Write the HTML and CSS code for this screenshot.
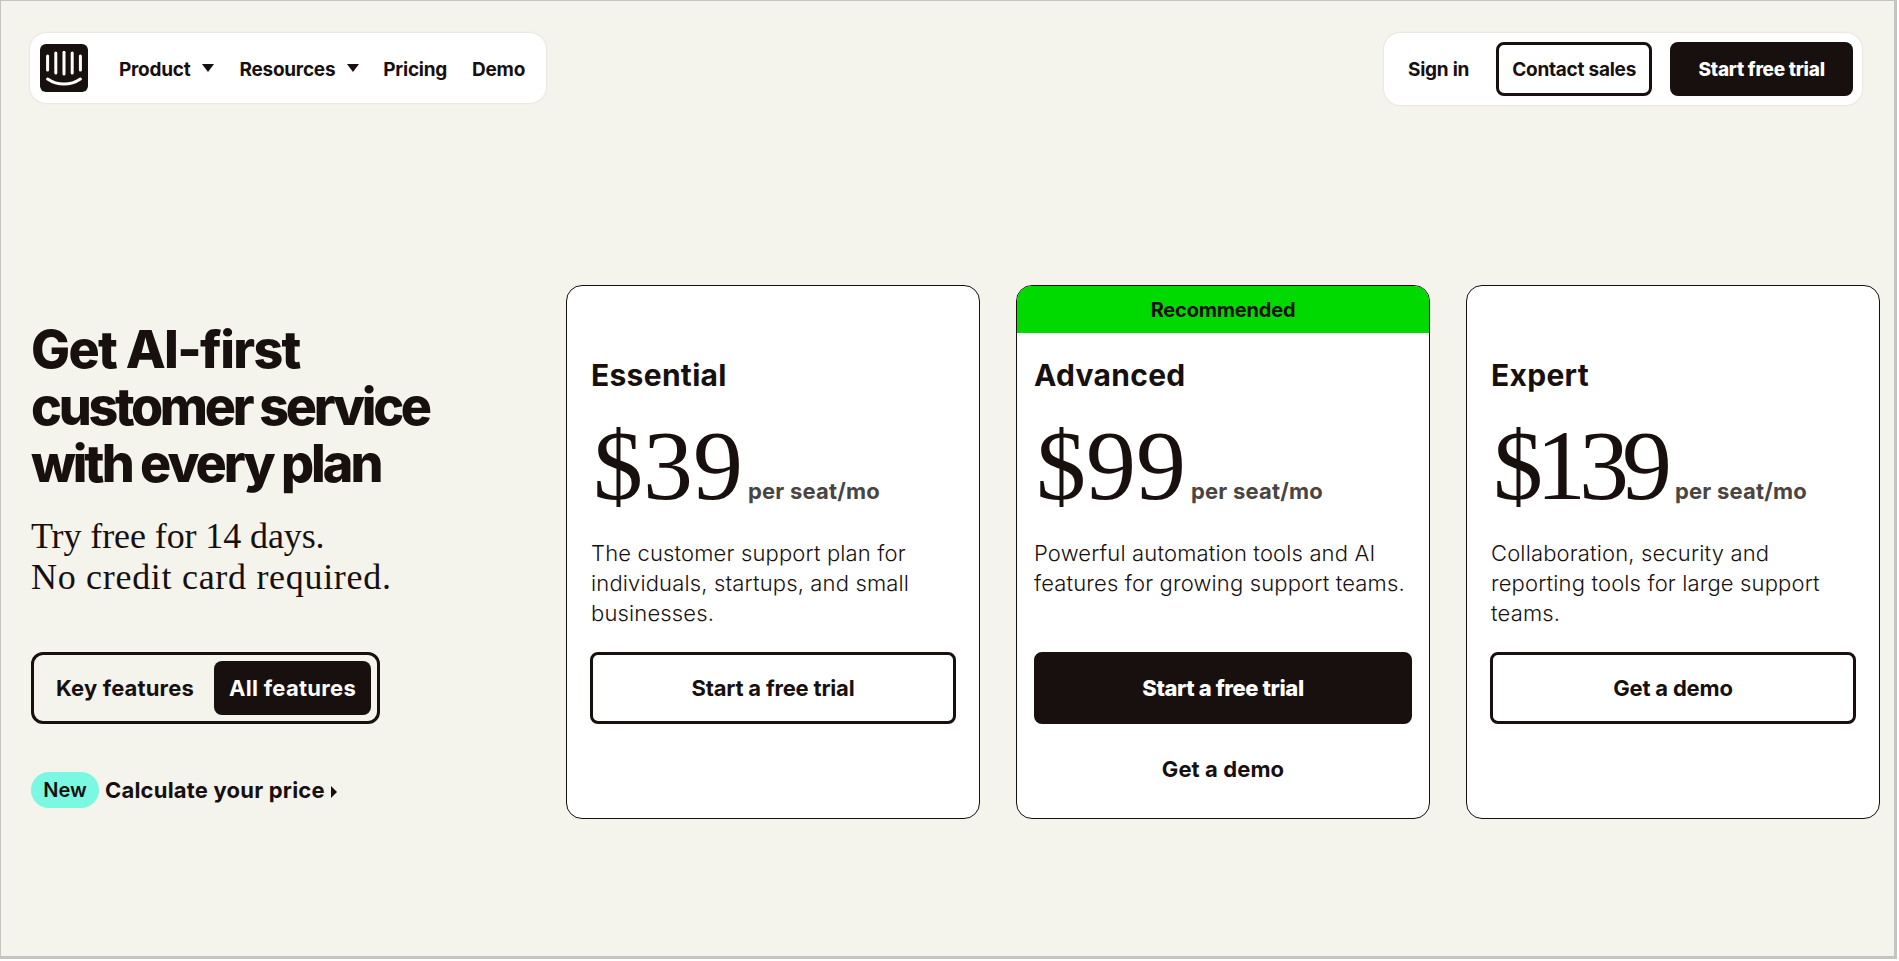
FILE: index.html
```html
<!DOCTYPE html>
<html lang="en">
<head>
<meta charset="utf-8">
<title>Pricing</title>
<link rel="stylesheet" href="styles.css">
</head>
<body>
<div class="page">
  <header class="header">
    <nav class="nav-left">
      <svg class="logo" viewBox="0 0 48 48" aria-label="Logo">
        <rect width="48" height="48" rx="6" fill="#17100e"/>
        <g stroke="#fff" stroke-width="3" stroke-linecap="round" fill="none">
          <path d="M7.600 12v14"/>
          <path d="M15.800 9v20"/>
          <path d="M24 8.300v21.700"/>
          <path d="M32.200 9v20"/>
          <path d="M40.400 12v14"/>
          <path d="M7.600 35c10 6.800 22.800 6.800 32.800 0"/>
        </g>
      </svg>
      <a class="nav-link product">Product<span class="caret"></span></a>
      <a class="nav-link resources">Resources<span class="caret"></span></a>
      <a class="nav-link pricing">Pricing</a>
      <a class="nav-link">Demo</a>
    </nav>
    <nav class="nav-right">
      <a class="nav-link signin">Sign in</a>
      <a class="btn-outline-nav">Contact sales</a>
      <a class="btn-solid-nav">Start free trial</a>
    </nav>
  </header>
  <main class="main">
    <section class="intro">
      <h1 class="headline"><span class="hl-a">Get AI-first</span><span class="hl-b">customer service</span><span class="hl-c">with every plan</span></h1>
      <p class="sub"><span class="sub-a">Try free for 14 days.</span><span class="sub-b">No credit card required.</span></p>
      <div class="toggle">
        <span class="toggle-item">Key features</span>
        <span class="toggle-item active">All features</span>
      </div>
      <a class="promo"><span class="badge">New</span><span class="promo-text">Calculate your price</span><span class="promo-arrow"></span></a>
    </section>
    <section class="cards">
      <article class="card">
        <div class="card-body">
          <h2 class="plan">Essential</h2>
          <div class="price"><span class="amount">$39</span><span class="per">per seat/mo</span></div>
          <p class="desc">The customer support plan for individuals, startups, and small businesses.</p>
          <a class="cta">Start a free trial</a>
        </div>
      </article>
      <article class="card">
        <div class="banner">Recommended</div>
        <div class="card-body featured">
          <h2 class="plan">Advanced</h2>
          <div class="price"><span class="amount">$99</span><span class="per">per seat/mo</span></div>
          <p class="desc">Powerful automation tools and AI features for growing support teams.</p>
          <a class="cta solid">Start a free trial</a>
          <a class="secondary">Get a demo</a>
        </div>
      </article>
      <article class="card">
        <div class="card-body">
          <h2 class="plan">Expert</h2>
          <div class="price"><span class="amount tight">$139</span><span class="per">per seat/mo</span></div>
          <p class="desc">Collaboration, security and reporting tools for large support teams.</p>
          <a class="cta">Get a demo</a>
        </div>
      </article>
    </section>
  </main>
</div>
</body>
</html>
```
FILE: styles.css
```css
* { box-sizing: border-box; }
html, body { margin: 0; padding: 0; background: #fff; }
body { font-family: Inter, "Liberation Sans", sans-serif; color: #17100e; overflow: hidden; }
h1, h2, p { margin: 0; }

.page {
  width: 1897px;
  height: 959px;
  background: #f4f3ec;
  border-style: solid;
  border-color: #c4c4c0;
  border-width: 1px 3px 3px 1px;
  overflow: hidden;
}

.header {
  display: flex;
  justify-content: space-between;
  align-items: flex-start;
  padding: 32px 32px 0 29px;
}
.nav-left, .nav-right {
  display: flex;
  align-items: center;
  background: #fff;
  border-radius: 16px;
  box-shadow: 0 0 2px rgba(23, 16, 14, .16);
}
.nav-left { width: 516px; height: 70px; padding-left: 10px; }
.nav-right { width: 478px; height: 72px; padding-left: 24px; }
.logo { width: 48px; height: 48px; margin-right: 31px; flex: none; }
.nav-left .nav-link { padding-top: 2px; }
.nav-link {
  font-size: 19px;
  font-weight: 700;
  letter-spacing: -.25px;
  display: flex;
  align-items: center;
}
.caret {
  width: 0;
  height: 0;
  border-left: 6px solid transparent;
  border-right: 6px solid transparent;
  border-top: 8px solid #17100e;
  margin: -3px 0 0 12px;
}
.product { margin-right: 25px; }
.resources { margin-right: 24px; }
.pricing { margin-right: 25px; }
.signin { margin-right: 27px; }
.btn-outline-nav, .btn-solid-nav {
  display: flex;
  align-items: center;
  justify-content: center;
  height: 54px;
  border-radius: 8px;
  font-size: 19px;
  font-weight: 700;
  letter-spacing: -.25px;
}
.btn-outline-nav { width: 156px; border: 3px solid #17100e; margin-right: 18px; }
.btn-solid-nav { width: 183px; background: #17100e; color: #fff; font-weight: 800; }

.main {
  display: flex;
  margin-top: 180px;
  padding: 0 14px 0 30px;
}
.intro { width: 535px; flex: none; padding-top: 36px; }
.headline {
  font-size: 52px;
  line-height: 57px;
  font-weight: 800;
}
.hl-a, .hl-b, .hl-c, .sub-a, .sub-b { display: block; }
.hl-a { letter-spacing: -1.7px; }
.hl-b { letter-spacing: -3.3px; }
.hl-c { letter-spacing: -3px; }
.sub {
  margin-top: 24px;
  font-family: "Liberation Serif", serif;
  font-size: 36px;
  line-height: 41px;
}
.sub-a { letter-spacing: -.1px; }
.sub-b { letter-spacing: .7px; }
.toggle {
  display: inline-flex;
  align-items: center;
  justify-content: space-between;
  width: 349px;
  height: 72px;
  margin-top: 54px;
  padding: 0 6px 0 22px;
  border: 3px solid #17100e;
  border-radius: 12px;
  vertical-align: top;
}
.toggle-item { font-size: 22px; font-weight: 700; letter-spacing: .15px; }
.toggle-item.active {
  width: 157px;
  height: 54px;
  display: flex;
  align-items: center;
  justify-content: center;
  background: #17100e;
  color: #fff;
  border-radius: 8px;
  letter-spacing: .3px;
}
.promo { display: flex; align-items: center; margin-top: 48px; }
.badge {
  width: 68px;
  height: 36px;
  display: flex;
  align-items: center;
  justify-content: center;
  background: #7af8e1;
  border-radius: 18px;
  font-size: 20px;
  font-weight: 600;
}
.promo-text { margin-left: 6px; font-size: 22px; font-weight: 700; letter-spacing: .2px; }
.promo-arrow {
  width: 0;
  height: 0;
  margin: 3px 0 0 6px;
  border-top: 6px solid transparent;
  border-bottom: 6px solid transparent;
  border-left: 6px solid #17100e;
}

.cards {
  display: grid;
  grid-template-columns: repeat(3, 414px);
  gap: 36px;
}
.card {
  height: 534px;
  background: #fff;
  border: 1px solid #17100e;
  border-radius: 16px;
  overflow: hidden;
}
.banner {
  height: 47px;
  display: flex;
  align-items: center;
  justify-content: center;
  background: #00da00;
  font-size: 20px;
  font-weight: 700;
  letter-spacing: -.2px;
}
.card-body { padding: 70px 24px 0; }
.card-body.featured { padding: 23px 17px 0; }
.plan { font-size: 30px; line-height: 38px; font-weight: 700; letter-spacing: .3px; }
.price { display: flex; align-items: baseline; margin: 17px 0; }
.amount { margin-left: 2px; font-family: "Liberation Serif", serif; font-size: 100px; line-height: 110px; }
.amount.tight { letter-spacing: -7px; }
.per { margin-left: 5px; font-size: 22px; line-height: 1; font-weight: 700; color: #4a4442; letter-spacing: .2px; }
.amount.tight + .per { margin-left: 10px; }
.desc { height: 90px; font-size: 22px; line-height: 30px; font-weight: 300; letter-spacing: .15px; }
.cta {
  display: flex;
  align-items: center;
  justify-content: center;
  height: 72px;
  margin-top: 24px;
  border: 3px solid #17100e;
  border-radius: 8px;
  font-size: 22px;
  font-weight: 700;
  letter-spacing: -.2px;
}
.card-body:not(.featured) .cta { margin-left: -1px; margin-right: -1px; }
.cta.solid { background: #17100e; color: #fff; font-weight: 800; letter-spacing: -.4px; }
.secondary {
  display: block;
  margin-top: 30px;
  text-align: center;
  font-size: 22px;
  line-height: 30px;
  font-weight: 700;
  letter-spacing: .1px;
}
```
